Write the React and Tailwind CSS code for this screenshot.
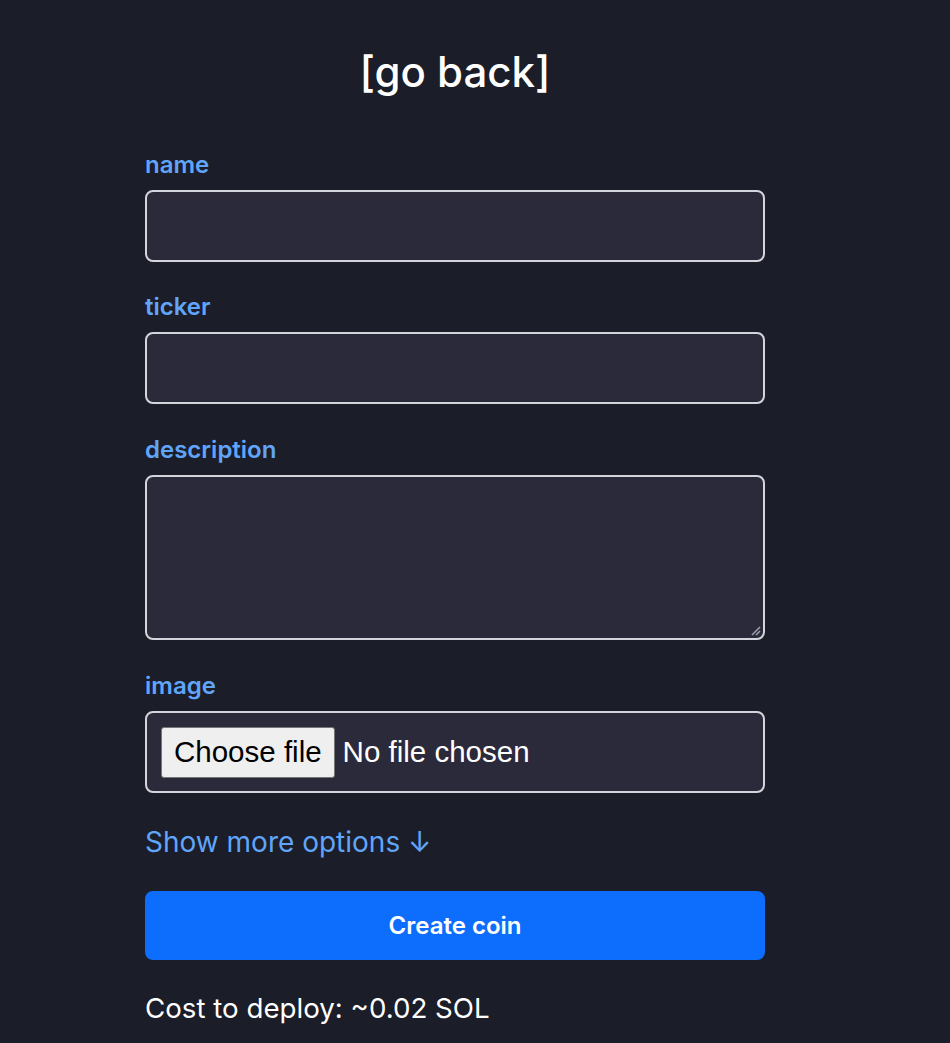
import React from 'react';

const inputBox = 'w-full rounded-lg border-2 border-[#d4d4dc] bg-[#2b2a3b]';

function Field({ label, children, className = '' }) {
  return (
    <div className={`flex flex-col gap-[10px] ${className}`}>
      <label className="text-[24px] leading-[30px] font-semibold text-[#60a5fa]">{label}</label>
      {children}
    </div>
  );
}

export default function App() {
  return (
    <div
      className="min-h-screen bg-[#1b1d28] text-white"
      style={{ fontFamily: 'Inter, "Noto Sans", sans-serif' }}
    >
      <div className="ml-[145px] w-[620px] pt-[46px] flex flex-col">
        <a className="self-center text-[42px] leading-[52px] font-medium text-white">[go back]</a>

        <div className="mt-[52px] flex flex-col gap-[30px]">
          <Field label="name">
            <div className={`${inputBox} h-[72px]`} />
          </Field>
          <Field label="ticker">
            <div className={`${inputBox} h-[72px]`} />
          </Field>
          <Field label="description" className="pt-[1px]">
            <div className={`${inputBox} h-[165px] relative`}>
              <svg className="absolute right-[2px] bottom-[2px]" width="12" height="12" viewBox="0 0 12 12">
                <path d="M11 3 L3 11 M11 7 L7 11" stroke="#9ca3af" strokeWidth="1.5" />
              </svg>
            </div>
          </Field>
          <Field label="image" className="pt-[1px]">
            <div className={`${inputBox} h-[82px] flex items-center px-[14px] gap-[8px]`}>
              <div
                className="h-[51px] px-[12px] flex items-center rounded-[3px] border border-[#767676] bg-[#efefef] text-black text-[29.5px]"
                style={{ fontFamily: '"Liberation Sans", Arial, sans-serif' }}
              >
                Choose file
              </div>
              <span className="text-[29.5px] text-white" style={{ fontFamily: '"Liberation Sans", Arial, sans-serif' }}>
                No file chosen
              </span>
            </div>
          </Field>
        </div>

        <button className="mt-[31px] self-start text-[28px] leading-[36px] text-[#60a5fa]">
          Show more options ↓
        </button>

        <button className="mt-[31px] w-full h-[69px] rounded-lg bg-[#0d6efd] text-white text-[24px] font-semibold">
          Create coin
        </button>

        <p className="mt-[30px] text-[27.7px] leading-[36px] text-white">Cost to deploy: ~0.02 SOL</p>
      </div>
    </div>
  );
}
